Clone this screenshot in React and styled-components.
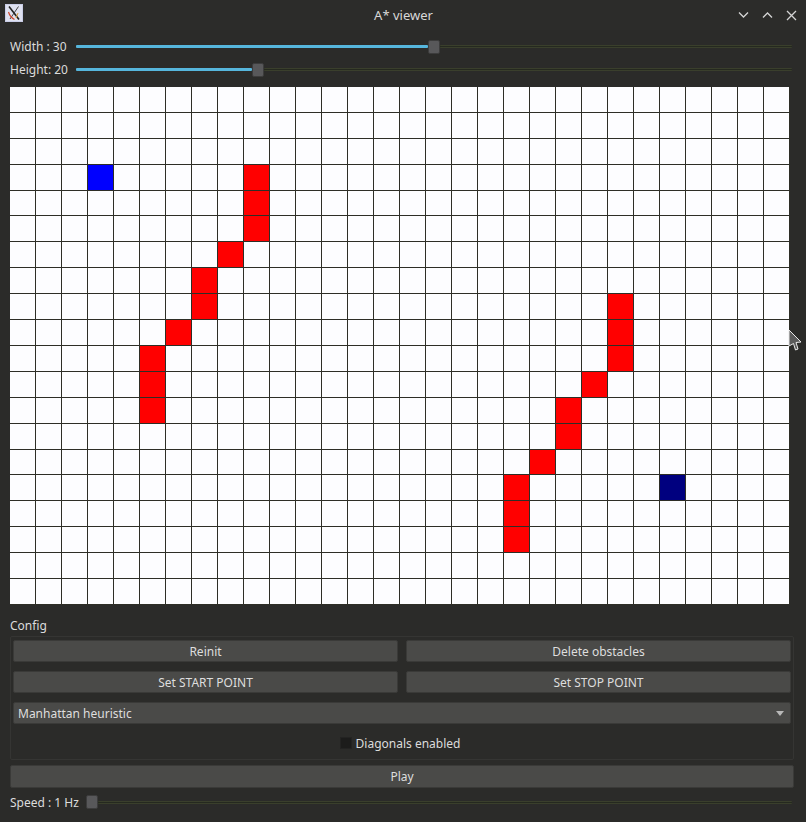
import React from 'react';
import styled, { createGlobalStyle } from 'styled-components';

const Global = createGlobalStyle`
  html, body { margin: 0; padding: 0; background: #2b2b29; }
  body { font-family: "Noto Sans", "Open Sans", sans-serif; font-size: 12px; color: #dcdcdc; }
  * { box-sizing: border-box; }
`;

const Window = styled.div`
  width: 806px;
  height: 822px;
  display: flex;
  flex-direction: column;
  background: #2b2b29;
  position: relative;
  overflow: hidden;
`;

const TitleBar = styled.div`
  height: 30px;
  flex: none;
  display: grid;
  grid-template-columns: 1fr auto 1fr;
  align-items: center;
  padding: 0 4px 0 5px;
  background: #2c2c2a;
`;

const Title = styled.div`
  font-size: 13px;
  color: #d8d8d8;
`;

const TitleButtons = styled.div`
  display: flex;
  justify-content: flex-end;
  align-items: center;
  gap: 13px;
  padding-right: 5px;
`;

const Content = styled.div`
  display: flex;
  flex-direction: column;
  padding: 5px 12px 0 10px;
`;

const SliderRow = styled.div`
  height: 23px;
  display: flex;
  align-items: center;
  margin-right: 2px;
`;

const SliderLabel = styled.div`
  width: ${p => p.$w}px;
  flex: none;
  white-space: nowrap;
  color: #dcdcdc;
`;

const Track = styled.div`
  flex: 1;
  display: flex;
  align-items: center;
  height: 16px;
`;

const Filled = styled.div`
  height: 3px;
  background: #56b6dc;
  border-radius: 1px;
  flex: none;
`;

const Empty = styled.div`
  height: 3px;
  flex: 1;
  background: #25291f;
  border-top: 1px solid #3a3f2c;
  border-bottom: 1px solid #3a3f2c;
  border-radius: 1px;
`;

const Handle = styled.div`
  width: 12px;
  height: 14px;
  flex: none;
  background: #58585a;
  border: 1px solid #3c3c3c;
  border-radius: 2px;
`;

const Board = styled.div`
  margin-top: 6px;
  width: 780px;
  height: 518px;
  display: grid;
  grid-template-columns: repeat(30, 1fr);
  grid-template-rows: repeat(20, 1fr);
  background: #fdfdff;
`;

const Cell = styled.div`
  background: ${p => p.$c || '#fdfdff'};
  border-right: 1px solid #2e2e26;
  border-bottom: 1px solid #2e2e26;
`;

const SectionLabel = styled.div`
  margin-top: 12px;
  height: 18px;
  line-height: 18px;
  color: #dcdcdc;
`;

const Group = styled.div`
  margin-top: 1px;
  border: 1px solid #353533;
  border-radius: 2px;
  padding: 3px 2px 5px 2px;
  display: flex;
  flex-direction: column;
  gap: 9px;
`;

const ButtonGrid = styled.div`
  display: grid;
  grid-template-columns: 1fr 1fr;
  gap: 9px 8px;
`;

const Button = styled.button`
  height: ${p => p.$h || 22}px;
  background: #4a4a48;
  border: 1px solid #3a3a38;
  border-radius: 2px;
  color: #dedede;
  font-family: "Noto Sans", "Open Sans", sans-serif;
  font-size: 12px;
  padding: 0;
`;

const Combo = styled.div`
  height: 22px;
  background: #4a4a48;
  border: 1px solid #3a3a38;
  border-radius: 2px;
  display: flex;
  align-items: center;
  justify-content: space-between;
  padding: 0 6px 0 4px;
  color: #dedede;
`;

const Arrow = styled.div`
  width: 0;
  height: 0;
  border-left: 4px solid transparent;
  border-right: 4px solid transparent;
  border-top: 5px solid #b8b8b8;
`;

const CheckRow = styled.div`
  height: 22px;
  margin-top: -1px;
  display: flex;
  align-items: center;
  justify-content: center;
  gap: 4px;
  padding-right: 4px;
`;

const CheckBox = styled.div`
  width: 12px;
  height: 12px;
  background: #1c1c1b;
  border: 1px solid #232322;
`;

const PlayButton = styled(Button)`
  margin-top: 5px;
  width: 784px;
`;

const SpeedRow = styled(SliderRow)`
  margin-top: 3px;
  height: 22px;
`;

const Cursor = styled.svg`
  position: absolute;
  left: 787px;
  top: 328px;
`;

const W = 30, H = 20;
const red = [
  [9,3],[9,4],[9,5],[8,6],[7,7],[7,8],[6,9],[5,10],[5,11],[5,12],
  [23,8],[23,9],[23,10],[22,11],[21,12],[21,13],[20,14],[19,15],[19,16],[19,17],
];
const colorAt = (x, y) => {
  if (x === 3 && y === 3) return '#0000ff';
  if (x === 25 && y === 15) return '#00007f';
  if (red.some(([a, b]) => a === x && b === y)) return '#ff0000';
  return null;
};

const Slider = ({ label, w, fraction }) => (
  <SliderRow>
    <SliderLabel $w={w}>{label}</SliderLabel>
    <Track>
      {fraction > 0 && <Filled style={{ width: `${fraction * 100}%` }} />}
      <Handle />
      <Empty />
    </Track>
  </SliderRow>
);

const AppIcon = () => (
  <svg width="18" height="18" viewBox="0 0 18 18">
    <rect x="0" y="0" width="18" height="18" fill="#c9cde6" />
    <rect x="1" y="1" width="16" height="16" fill="#dfe1f0" />
    <path d="M4 2.5 L14 15.5" stroke="#222" strokeWidth="1.6" />
    <path d="M13.5 2.5 L5 15" stroke="#333" strokeWidth="0.9" />
    <path d="M3.5 8 Q5 13 9.5 15.5" stroke="#d04a30" strokeWidth="1.2" fill="none" />
    <path d="M13 9 L11 14" stroke="#e0a040" strokeWidth="1" fill="none" />
  </svg>
);

const Chevron = ({ up }) => (
  <svg width="11" height="8" viewBox="0 0 11 8">
    <path d={up ? 'M1 6.5 L5.5 2 L10 6.5' : 'M1 1.5 L5.5 6 L10 1.5'} stroke="#d4d4d4" strokeWidth="1.3" fill="none" />
  </svg>
);

const Close = () => (
  <svg width="11" height="11" viewBox="0 0 11 11">
    <path d="M1 1 L10 10 M10 1 L1 10" stroke="#d4d4d4" strokeWidth="1.3" fill="none" />
  </svg>
);

export default function App() {
  const cells = [];
  for (let y = 0; y < H; y++) {
    for (let x = 0; x < W; x++) {
      cells.push(<Cell key={`${x}-${y}`} $c={colorAt(x, y)} />);
    }
  }
  return (
    <>
      <Global />
      <Window>
        <TitleBar>
          <div><AppIcon /></div>
          <Title>A* viewer</Title>
          <TitleButtons>
            <Chevron />
            <Chevron up />
            <Close />
          </TitleButtons>
        </TitleBar>
        <Content>
          <Slider label="Width : 30" w={66} fraction={0.492} />
          <Slider label="Height: 20" w={66} fraction={0.246} />
          <Board>{cells}</Board>
          <SectionLabel>Config</SectionLabel>
          <Group>
            <ButtonGrid>
              <Button>Reinit</Button>
              <Button>Delete obstacles</Button>
              <Button>Set START POINT</Button>
              <Button>Set STOP POINT</Button>
            </ButtonGrid>
            <Combo>
              <span>Manhattan heuristic</span>
              <Arrow />
            </Combo>
            <CheckRow>
              <CheckBox />
              <span>Diagonals enabled</span>
            </CheckRow>
          </Group>
          <PlayButton $h={23}>Play</PlayButton>
          <SpeedRow>
            <SliderLabel $w={76}>Speed : 1 Hz</SliderLabel>
            <Track>
              <Handle />
              <Empty />
            </Track>
          </SpeedRow>
        </Content>
        <Cursor width="16" height="24" viewBox="0 0 16 24">
          <path d="M2 2 L14 14 L9 14.5 L11 21 L8.5 22 L6.5 15.5 L2 18 Z" fill="#5a5a5a" stroke="#e8e8e8" strokeWidth="1" />
        </Cursor>
      </Window>
    </>
  );
}
